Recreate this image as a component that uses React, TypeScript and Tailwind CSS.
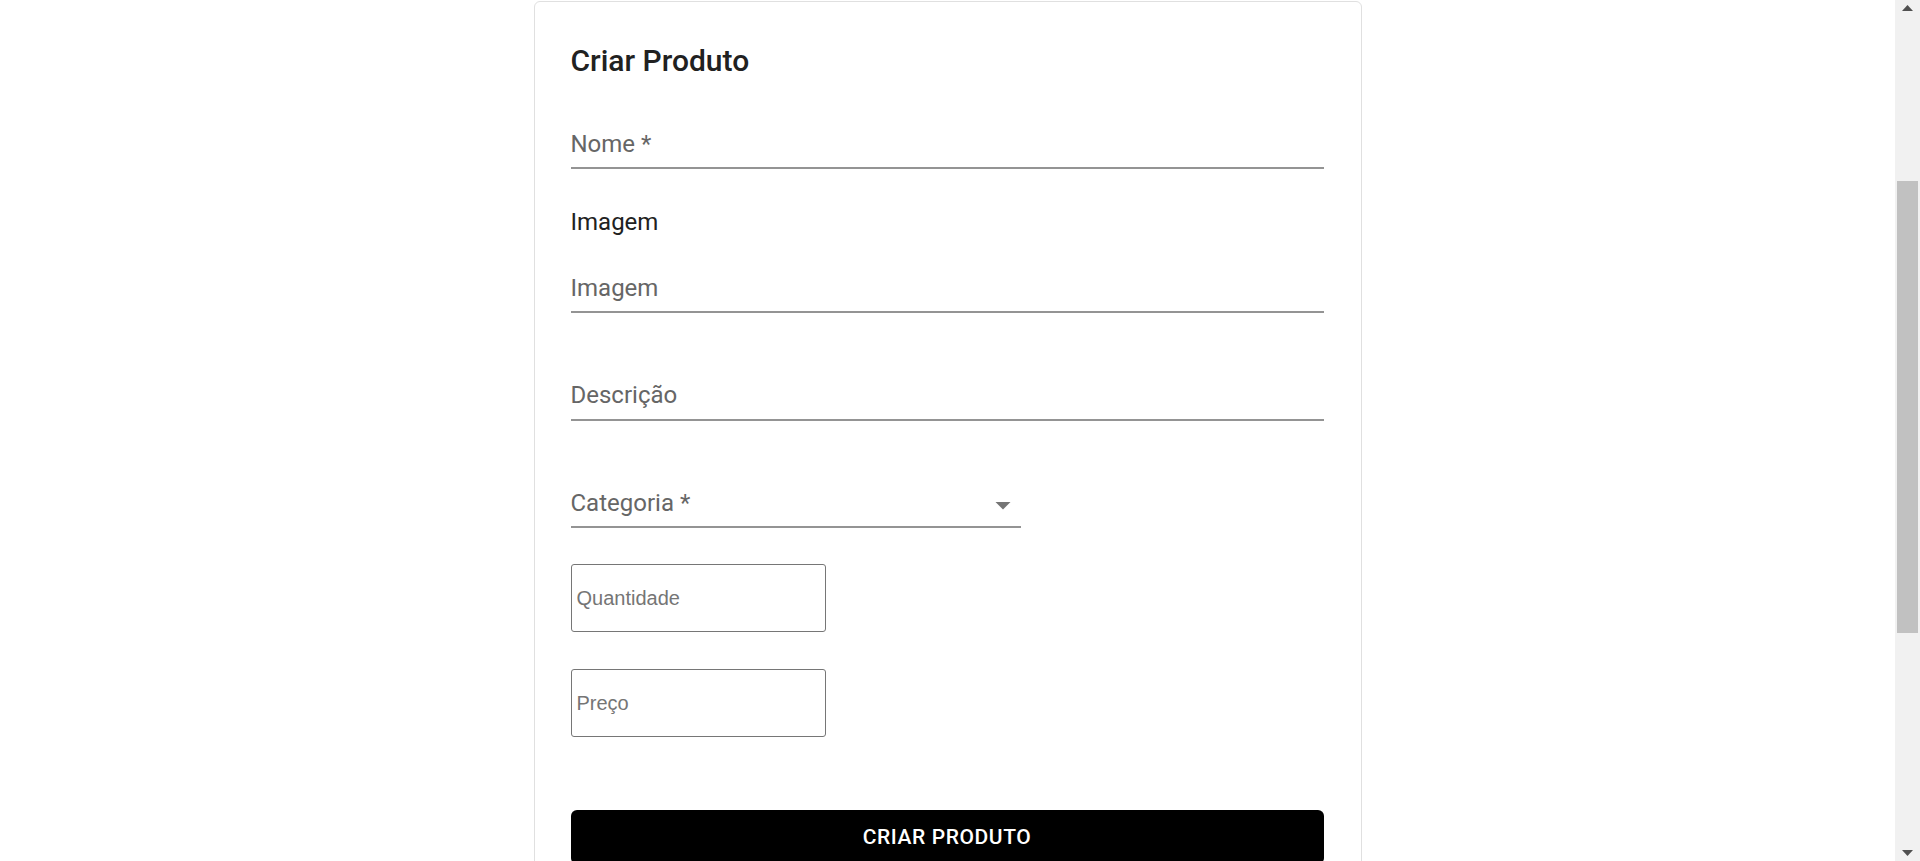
import React from "react";

// Campos de texto no estilo "standard" (só sublinhado)
function UnderlineInput({ placeholder, className }: { placeholder: string; className: string }) {
  return (
    <div className={`border-b-2 border-[#949494] ${className}`}>
      <input
        type="text"
        placeholder={placeholder}
        className="block h-[36px] w-full bg-transparent text-[24px] text-[#212121] outline-none placeholder:text-[#666666]"
      />
    </div>
  );
}

function Scrollbar() {
  return (
    <div className="flex w-[25px] shrink-0 flex-col bg-[#f1f1f1]">
      <div className="flex h-[25px] items-start justify-center pt-[5px]">
        <svg width="11" height="6" viewBox="0 0 11 6">
          <path d="M0 6 L5.5 0 L11 6 Z" fill="#505050" />
        </svg>
      </div>
      <div className="flex-1 pt-[156px]">
        <div className="mx-[2px] h-[452px] bg-[#c1c1c1]" />
      </div>
      <div className="flex h-[25px] items-end justify-center pb-[5px]">
        <svg width="11" height="6" viewBox="0 0 11 6">
          <path d="M0 0 L11 0 L5.5 6 Z" fill="#505050" />
        </svg>
      </div>
    </div>
  );
}

export default function App() {
  return (
    <div className="flex h-[861px] overflow-hidden bg-white font-['Roboto',sans-serif]">
      <main className="flex flex-1 items-start justify-center">
        <form
          className="mt-px w-[828px] rounded-[6px] border border-[#e0e0e0] bg-white pl-[36px] pr-[37px] pt-[35px] pb-[40px]"
          onSubmit={(e) => e.preventDefault()}
        >
          <h2 className="text-[30px] font-medium leading-[48px] text-[#212121]">Criar Produto</h2>

          <UnderlineInput placeholder="Nome *" className="mt-[41px] pb-[5px]" />

          <p className="mt-[35px] text-[24px] leading-[36px] text-[#212121]">Imagem</p>
          <UnderlineInput placeholder="Imagem" className="mt-[30px] pb-[5px]" />

          <UnderlineInput placeholder="Descrição" className="mt-[64px] pb-[6px]" />

          {/* Select de categoria */}
          <div className="mt-[64px] flex w-[450px] items-center justify-between border-b-2 border-[#949494] pb-[5px]">
            <span className="text-[24px] leading-[36px] text-[#666666]">Categoria *</span>
            <svg className="translate-y-[2px]" width="36" height="36" viewBox="0 0 24 24">
              <path d="M7 10l5 5 5-5z" fill="#757575" />
            </svg>
          </div>

          <input
            type="number"
            placeholder="Quantidade"
            className="mt-[36px] block h-[68px] w-[255px] rounded-[3px] border border-[#767676] px-[5px] font-['Liberation_Sans',Arial,sans-serif] text-[20px] outline-none placeholder:text-[#757575]"
          />
          <input
            type="number"
            placeholder="Preço"
            className="mt-[37px] block h-[68px] w-[255px] rounded-[3px] border border-[#767676] px-[5px] font-['Liberation_Sans',Arial,sans-serif] text-[20px] outline-none placeholder:text-[#757575]"
          />

          <button
            type="submit"
            className="mt-[73px] flex h-[54px] w-full items-center justify-center rounded-[6px] bg-black pt-[2px] text-[21px] font-medium uppercase tracking-[0.6px] text-white"
          >
            Criar Produto
          </button>
        </form>
      </main>
      <Scrollbar />
    </div>
  );
}
